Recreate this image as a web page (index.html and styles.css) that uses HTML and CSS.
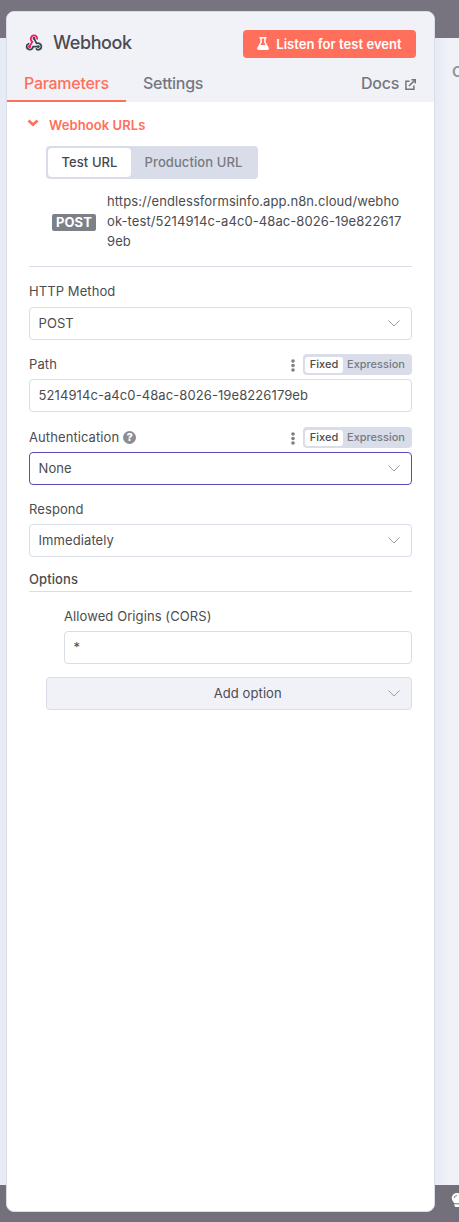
FILE: index.html
```
<!DOCTYPE html>
<html lang="en">
<head>
<meta charset="utf-8">
<title>Webhook</title>
<link rel="stylesheet" href="styles.css">
</head>
<body>
<div class="band band-top"></div>
<div class="band band-bottom"></div>
<span class="behind-title">O</span>
<svg class="bulb" viewBox="0 0 12 16" fill="#fff"><path d="M6 0a5.5 5.5 0 0 0-4 9.3c.7.8 1 1.2 1.2 1.7h5.6c.2-.5.5-.9 1.2-1.7A5.5 5.5 0 0 0 6 0z"/><path d="M3.2 12h5.6v1.2L7.8 15H4.2l-1-1.8z"/><path d="M3 5.5A3 3 0 0 1 6 2.6" fill="none" stroke="#77747f"/></svg>
<main class="panel">
  <header class="header">
    <div class="title-row">
      <svg class="logo" viewBox="0 0 24 23" fill="none" stroke-width="2.4" stroke-linecap="round">
        <g stroke="#37474f"><path d="M18 17h-7.200c-.4 2.400-2.200 4-4.500 4A4.200 4.200 0 0 1 2 17c0-1.900 1-3.200 2.700-3.800"/><path d="m12 6 3.500 6.600c3.300-1.100 6.500 1.200 6.500 4.400 0 3.700-4 5.500-6.800 3.300"/></g>
        <path stroke="#ed1e65" d="m6 17 3.700-6.500C5.800 7.600 8 2 12 2c2.600 0 4.400 1.900 4.300 4.500"/>
        <circle cx="6" cy="17" r=".9" stroke="#ed1e65"/><circle cx="12" cy="6" r=".7" stroke="#37474f"/><circle cx="18" cy="17" r=".7" stroke="#37474f"/>
      </svg>
      <h1 class="title">Webhook</h1>
      <button class="listen"><svg class="flask" viewBox="0 0 12 13" fill="#fff"><path d="M2.500 0h7v1.500h-.8v3.700l3 5.500c.6 1.100-.1 2.300-1.200 2.300h-9C.4 13-.3 11.800.3 10.700l3-5.500V1.500h-.8zM4.800 1.500v4L3.400 8h5.200L7.200 5.500v-4z"/></svg>Listen for test event</button>
    </div>
    <nav class="tabs">
      <a class="tab active">Parameters</a><a class="tab">Settings</a>
      <a class="docs">Docs<svg class="ext" viewBox="0 0 12 12" fill="none" stroke="#71747a" stroke-width="1.600"><path d="M5 2.500H1v8.700h8.700V7"/><path d="M4.300 7.700 10.500 1.500"/><path d="M7 .8h4.200V5" /></svg></a>
    </nav>
  </header>
  <div class="content">
    <div class="section"><svg class="caret" viewBox="0 0 12 8"><path d="M1.500 1.500 6 5.700l4.500-4.200" fill="none" stroke="#ff6f5c" stroke-width="2.700"/></svg>Webhook URLs</div>
    <div class="switch"><span class="choice selected">Test URL</span><span class="choice">Production URL</span></div>
    <div class="url-row"><span class="badge">POST</span><span class="url">https://endlessformsinfo.app.n8n.cloud/webhook-test/5214914c-a4c0-48ac-8026-19e8226179eb</span></div>

    <div class="label first">HTTP Method</div>
    <div class="field">POST<svg class="chev" viewBox="0 0 12 7"><path d="M.5.500 6 6 11.500.500"/></svg></div>

    <div class="label">Path
      <span class="tools"><svg class="dots" viewBox="0 0 4 13"><circle cx="2" cy="2" r="1.800"/><circle cx="2" cy="6.500" r="1.800"/><circle cx="2" cy="11" r="1.800"/></svg><span class="mini"><b>Fixed</b><i>Expression</i></span></span></div>
    <div class="field">5214914c-a4c0-48ac-8026-19e8226179eb</div>

    <div class="label tall">Authentication<span class="help">?</span>
      <span class="tools"><svg class="dots" viewBox="0 0 4 13"><circle cx="2" cy="2" r="1.800"/><circle cx="2" cy="6.500" r="1.800"/><circle cx="2" cy="11" r="1.800"/></svg><span class="mini"><b>Fixed</b><i>Expression</i></span></span></div>
    <div class="field focused">None<svg class="chev" viewBox="0 0 12 7"><path d="M.5.500 6 6 11.500.500"/></svg></div>

    <div class="label">Respond</div>
    <div class="field">Immediately<svg class="chev" viewBox="0 0 12 7"><path d="M.5.500 6 6 11.500.500"/></svg></div>

    <h2 class="options">Options</h2>
    <div class="nested">
      <div class="label">Allowed Origins (CORS)</div>
      <div class="field">*</div>
    </div>
    <div class="field add"><span class="add-text">Add option</span><svg class="chev" viewBox="0 0 12 7"><path d="M.5.500 6 6 11.500.500"/></svg></div>
  </div>
</main>
</body>
</html>
```
FILE: styles.css
```
* { box-sizing: border-box; }
body {
  margin: 0;
  height: 1222px;
  padding: 11px 24px 10px 6px;
  position: relative;
  overflow: hidden;
  background: linear-gradient(90deg, #e7ebf5 0, #e7ebf5 437px, #f1f2f8 450px);
  font-family: Inter, "Liberation Sans", sans-serif;
  font-size: 13px;
  letter-spacing: .09px;
  color: #4b4c50;
}
.band { position: absolute; left: 0; right: 0; background: #777480; }
.band-top { top: 0; height: 38px; }
.band-bottom { bottom: 0; height: 37px; background: #73707b; }
.behind-title { position: absolute; left: 452px; top: 62px; font-size: 15px; line-height: 20px; font-weight: 600; color: #909298; }
.bulb { position: absolute; left: 451px; top: 1193px; width: 12px; height: 15px; }
.panel {
  position: relative;
  width: 429px;
  height: 1201px;
  border: 1px solid #d9dde9;
  border-radius: 8px;
  background: #fff;
  overflow: hidden;
}
.header { height: 90px; background: #f1f2f8; display: flex; flex-direction: column; }
.title-row { display: flex; align-items: center; height: 62px; padding: 0 18px; }
.logo { width: 18px; height: 17px; margin-top: -2px; }
.title { margin: 0 auto 0 10px; font-size: 18px; line-height: 24px; font-weight: 500; letter-spacing: -.4px; }
.listen {
  width: 173px; height: 28px; padding: 0 0 1px; margin-top: 2px;
  display: flex; align-items: center; justify-content: center; gap: 7px;
  border: 0; border-radius: 4px; background: #ff6f5c; color: #fff;
  font: 600 13px/26px Inter, sans-serif; letter-spacing: .04px; white-space: nowrap;
}
.flask { width: 12px; height: 13px; }
.tabs { display: flex; height: 28px; font-size: 16px; font-weight: 500; line-height: 19px; letter-spacing: -.28px; color: #75787e; }
.tab { padding: 0 17px; height: 28px; white-space: nowrap; }
.tab.active { width: 119px; color: #ff6f5c; border-bottom: 2px solid #ff6f5c; }
.docs { margin-left: auto; padding-right: 18px; display: flex; gap: 6px; }
.ext { width: 11px; height: 11px; margin-top: 5px; }
.content { padding: 0 22px; }
.section { display: flex; align-items: center; height: 44px; padding-top: 2px; color: #ff6f5c; font-weight: 600; }
.caret { width: 12px; height: 8px; margin: -4px 10px 0 -2px; }
.switch { display: flex; width: 212px; height: 33px; margin-left: 17px; padding: 2px; border-radius: 4px; background: #d9dde9; line-height: 29px; font-weight: 500; color: #777a81; }
.choice { flex: 1; text-align: center; white-space: nowrap; }
.choice.selected { flex: 0 0 83px; background: #fff; border-radius: 4px; color: #46474b; }
.url-row { display: flex; align-items: center; height: 88px; padding-left: 23px; border-bottom: 1px solid #d9dce8; }
.badge { width: 44px; height: 17px; border-radius: 2px; background: #7d8087; color: #fff; font-weight: 700; line-height: 17px; text-align: center; }
.url { width: 296px; margin: -3px 0 0 11px; line-height: 20px; word-break: break-all; }
.label { display: flex; align-items: center; height: 39px; padding-top: 9px; line-height: 20px; }
.label.first { height: 40px; padding-top: 7px; }
.label.tall { height: 40px; padding-top: 10px; }
.field { display: flex; align-items: center; height: 33px; padding: 0 11px 1px 8.500px; border: 1px solid #d9dde9; border-radius: 4px; background: #fff; }
.field.focused { border-color: #5b49b8; }
.chev { width: 12px; height: 7px; margin-left: auto; fill: none; stroke: #9b9da3; }
.tools { display: flex; align-items: center; gap: 8px; margin-left: auto; }
.dots { width: 4px; height: 13px; margin-top: 3px; fill: #7d8087; }
.mini { display: flex; width: 109px; height: 21px; padding: 3px 2px 2px; border-radius: 4px; background: #d9dde9; font-size: 11px; line-height: 15px; letter-spacing: 0; }
.mini b { width: 38px; height: 16px; border-radius: 3px; background: #fff; font-weight: 500; text-align: center; }
.mini i { margin-left: 4px; font-style: normal; font-weight: 500; color: #777a81; }
.help { width: 13px; height: 13px; margin-left: 4px; border-radius: 50%; background: #8b8d94; color: #fff; font-size: 11px; line-height: 13px; font-weight: 800; text-align: center; }
.options { margin: 0; height: 35px; padding-top: 12px; border-bottom: 1px solid #d9dde9; font-size: 13px; line-height: 20px; font-weight: 500; }
.nested { margin: 0 0 13px 35px; }
.add { margin-left: 17px; background: #f1f2f8; }
.add-text { flex: 1; padding-left: 52px; text-align: center; }
```
